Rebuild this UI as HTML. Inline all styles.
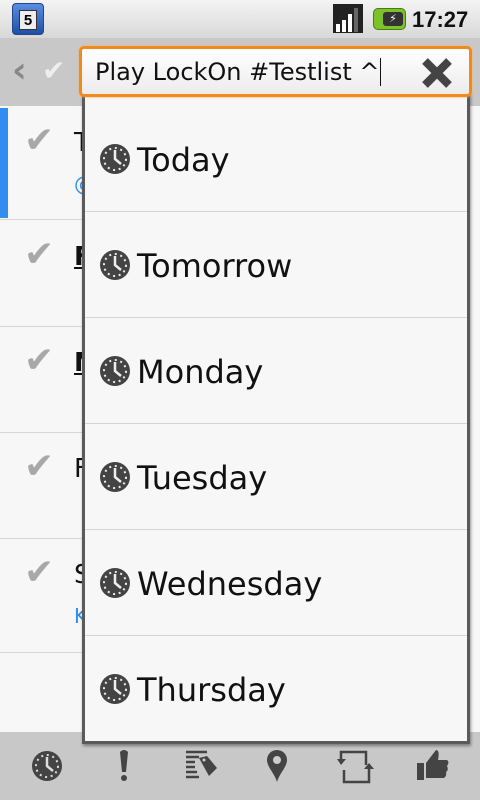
<!DOCTYPE html>
<html><head><meta charset="utf-8"><style>
*{margin:0;padding:0;box-sizing:border-box}
body{width:480px;height:800px;overflow:hidden;background:#f7f7f7;font-family:"DejaVu Sans","Liberation Sans",sans-serif;position:relative}
.abs{position:absolute}
.status{left:0;top:0;width:480px;height:38px;background:linear-gradient(#f4f4f4,#d8d8d8)}
.tool{left:0;top:38px;width:480px;height:68px;background:#c8c8c8}
.sep{left:0;width:82px;height:1px;background:#d6d6d6}
.chk{left:24px;font-size:36px;color:#a8a8a8;font-weight:bold}
.lt{left:74px;font-size:26px;color:#111}
.drop{left:82px;top:92px;width:388px;height:652px;background:#f7f7f7;border:3px solid #5a5a5a;border-top:none;box-shadow:1px 2px 3px rgba(0,0,0,.4)}
.item{position:absolute;left:0;width:382px;height:106px;border-bottom:1px solid #d4d4d4}
.item svg{position:absolute;left:14px;top:37px}
.item span{position:absolute;left:52px;top:35px;font-size:32px;color:#111}
.bot{left:0;top:732px;width:480px;height:68px;background:#c8c8c8}
</style></head><body>
<div class="abs status"></div>
<div class="abs" style="left:12px;top:3px;width:32px;height:32px;border-radius:4px;background:linear-gradient(#5a8ee0,#1e4fa8);border:1px solid #26468a"><div style="position:absolute;left:6px;top:6px;width:18px;height:20px;background:#eee;border:1px solid #333;font:bold 15px 'Liberation Sans',sans-serif;text-align:center;line-height:19px">5</div></div>
<div class="abs" style="left:333px;top:4px;width:30px;height:29px;background:#222"></div>
<svg class="abs" style="left:335px;top:6px" width="28" height="26"><rect x="1" y="18" width="4" height="8" fill="#fff"/><rect x="7" y="14" width="4" height="12" fill="#fff"/><rect x="13" y="8" width="4" height="18" fill="#fff"/><rect x="19" y="2" width="4" height="24" fill="#666"/></svg>
<div class="abs" style="left:373px;top:8px;width:33px;height:22px;border-radius:5px;background:#7cc22a;border:1px solid #4a7a14"><div style="position:absolute;left:9px;top:3px;width:20px;height:14px;background:#333;border-radius:3px;color:#fff;font-size:11px;text-align:center;line-height:14px">⚡</div></div>
<div class="abs" style="left:412px;top:7px;font:bold 22px 'Liberation Sans',sans-serif;color:#111">17:27</div>
<div class="abs tool"></div>
<div class="abs" style="left:12px;top:50px;font-size:36px;color:#888;font-weight:bold">‹</div>
<div class="abs" style="left:42px;top:54px;font-size:28px;color:#eee;font-weight:bold">✔</div>
<div class="abs" style="left:0;top:108px;width:8px;height:110px;background:#2f8ef0"></div>
<div class="abs sep" style="top:219px"></div><div class="abs sep" style="top:326px"></div><div class="abs sep" style="top:432px"></div><div class="abs sep" style="top:538px"></div><div class="abs sep" style="top:652px"></div>
<div class="abs chk" style="top:120px">✔</div><div class="abs chk" style="top:234px">✔</div><div class="abs chk" style="top:340px">✔</div><div class="abs chk" style="top:446px">✔</div><div class="abs chk" style="top:552px">✔</div>
<div class="abs lt" style="top:128px">T</div><div class="abs lt" style="top:172px;color:#2f8ef0;font-size:20px">@</div>
<div class="abs lt" style="top:242px;font-weight:bold;text-decoration:underline">F</div>
<div class="abs lt" style="top:348px;font-weight:bold;text-decoration:underline">N</div>
<div class="abs lt" style="top:454px">F</div>
<div class="abs lt" style="top:560px">S</div><div class="abs lt" style="top:604px;color:#2f8ef0;font-size:20px">K</div>
<div class="abs bot"></div>
<div class="abs drop">
<div class="item" style="top:14px"><svg width="32" height="32"><circle cx="16" cy="16" r="15" fill="#444"/><circle cx="16" cy="16" r="11" fill="none" stroke="#eee" stroke-width="2" stroke-dasharray="2 3.7"/><path d="M16 7V16L22 21" stroke="#eee" stroke-width="2.5" fill="none"/></svg><span>Today</span></div>
<div class="item" style="top:120px"><svg width="32" height="32"><circle cx="16" cy="16" r="15" fill="#444"/><circle cx="16" cy="16" r="11" fill="none" stroke="#eee" stroke-width="2" stroke-dasharray="2 3.7"/><path d="M16 7V16L22 21" stroke="#eee" stroke-width="2.5" fill="none"/></svg><span>Tomorrow</span></div>
<div class="item" style="top:226px"><svg width="32" height="32"><circle cx="16" cy="16" r="15" fill="#444"/><circle cx="16" cy="16" r="11" fill="none" stroke="#eee" stroke-width="2" stroke-dasharray="2 3.7"/><path d="M16 7V16L22 21" stroke="#eee" stroke-width="2.5" fill="none"/></svg><span>Monday</span></div>
<div class="item" style="top:332px"><svg width="32" height="32"><circle cx="16" cy="16" r="15" fill="#444"/><circle cx="16" cy="16" r="11" fill="none" stroke="#eee" stroke-width="2" stroke-dasharray="2 3.7"/><path d="M16 7V16L22 21" stroke="#eee" stroke-width="2.5" fill="none"/></svg><span>Tuesday</span></div>
<div class="item" style="top:438px"><svg width="32" height="32"><circle cx="16" cy="16" r="15" fill="#444"/><circle cx="16" cy="16" r="11" fill="none" stroke="#eee" stroke-width="2" stroke-dasharray="2 3.7"/><path d="M16 7V16L22 21" stroke="#eee" stroke-width="2.5" fill="none"/></svg><span>Wednesday</span></div>
<div class="item" style="top:544px;border:none"><svg width="32" height="32"><circle cx="16" cy="16" r="15" fill="#444"/><circle cx="16" cy="16" r="11" fill="none" stroke="#eee" stroke-width="2" stroke-dasharray="2 3.7"/><path d="M16 7V16L22 21" stroke="#eee" stroke-width="2.5" fill="none"/></svg><span>Thursday</span></div>
</div>
<div class="abs" style="left:79px;top:46px;width:393px;height:51px;border:3px solid #f08a1c;border-radius:5px;background:linear-gradient(#fff,#ececec);box-shadow:0 0 2px #f7b060">
<div style="position:absolute;left:13px;top:9px;font-size:24px;color:#111">Play LockOn #Testlist ^<span style="display:inline-block;width:1px;height:28px;background:#111;vertical-align:-6px"></span></div>
<svg style="position:absolute;right:16px;top:8px" width="32" height="32"><path d="M4 4L28 28M28 4L4 28" stroke="#444" stroke-width="8"/></svg>
</div>
<svg class="abs" style="left:31px;top:750px" width="32" height="32"><circle cx="16" cy="16" r="15" fill="#444"/><circle cx="16" cy="16" r="11" fill="none" stroke="#ddd" stroke-width="2" stroke-dasharray="2 3.7"/><path d="M16 7V16L22 21" stroke="#ddd" stroke-width="2.5" fill="none"/></svg>
<svg class="abs" style="left:114px;top:748px" width="20" height="36"><path d="M6 4Q10 0 14 4L12 24H8Z" fill="#444"/><circle cx="10" cy="30" r="3" fill="#444"/></svg>
<svg class="abs" style="left:185px;top:750px" width="34" height="34"><g stroke="#444" stroke-width="2.5"><path d="M1 2H22M1 7H14M1 12H10M1 17H10M1 22H12M1 27H14"/></g><path d="M14 8L22 6L32 18L24 26Z" fill="#444"/><circle cx="19" cy="10" r="1.5" fill="#ccc"/></svg>
<svg class="abs" style="left:265px;top:748px" width="24" height="36"><path d="M12 2A10 10 0 0 1 22 12C22 19 14 26 12 34C10 26 2 19 2 12A10 10 0 0 1 12 2Z" fill="#444"/><circle cx="12" cy="12" r="4" fill="#ccc"/></svg>
<svg class="abs" style="left:336px;top:750px" width="38" height="34"><path d="M5 9V2H30V15M33 19V32H8V20" stroke="#444" stroke-width="2.5" fill="none"/><path d="M1 9H10L5 15Z M28 19H38L33 13Z" fill="#444"/></svg>
<svg class="abs" style="left:416px;top:748px" width="34" height="34"><rect x="1" y="15" width="7" height="17" fill="#444"/><path d="M10 15L20 2Q24 2 22 12H31Q34 14 31 18Q33 22 30 24Q31 28 28 30H10Z" fill="#444"/></svg>
</body></html>
